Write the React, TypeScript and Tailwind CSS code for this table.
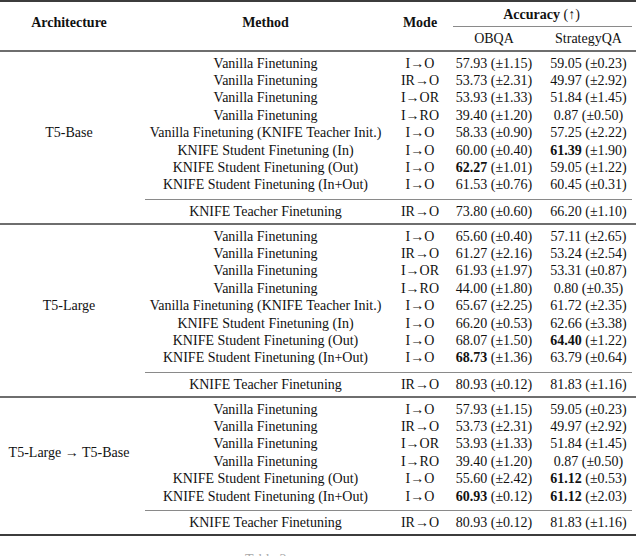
import React from "react";

type Cell = React.ReactNode;
type Row = [Cell, Cell, Cell, Cell];

const B = ({ children }: { children: React.ReactNode }) => <span className="font-bold">{children}</span>;

const block1: Row[] = [
  ["Vanilla Finetuning", "I→O", "57.93 (±1.15)", "59.05 (±0.23)"],
  ["Vanilla Finetuning", "IR→O", "53.73 (±2.31)", "49.97 (±2.92)"],
  ["Vanilla Finetuning", "I→OR", "53.93 (±1.33)", "51.84 (±1.45)"],
  ["Vanilla Finetuning", "I→RO", "39.40 (±1.20)", "0.87 (±0.50)"],
  ["Vanilla Finetuning (KNIFE Teacher Init.)", "I→O", "58.33 (±0.90)", "57.25 (±2.22)"],
  ["KNIFE Student Finetuning (In)", "I→O", "60.00 (±0.40)", <><B>61.39</B> (±1.90)</>],
  ["KNIFE Student Finetuning (Out)", "I→O", <><B>62.27</B> (±1.01)</>, "59.05 (±1.22)"],
  ["KNIFE Student Finetuning (In+Out)", "I→O", "61.53 (±0.76)", "60.45 (±0.31)"],
];
const teacher1: Row = ["KNIFE Teacher Finetuning", "IR→O", "73.80 (±0.60)", "66.20 (±1.10)"];

const block2: Row[] = [
  ["Vanilla Finetuning", "I→O", "65.60 (±0.40)", "57.11 (±2.65)"],
  ["Vanilla Finetuning", "IR→O", "61.27 (±2.16)", "53.24 (±2.54)"],
  ["Vanilla Finetuning", "I→OR", "61.93 (±1.97)", "53.31 (±0.87)"],
  ["Vanilla Finetuning", "I→RO", "44.00 (±1.80)", "0.80 (±0.35)"],
  ["Vanilla Finetuning (KNIFE Teacher Init.)", "I→O", "65.67 (±2.25)", "61.72 (±2.35)"],
  ["KNIFE Student Finetuning (In)", "I→O", "66.20 (±0.53)", "62.66 (±3.38)"],
  ["KNIFE Student Finetuning (Out)", "I→O", "68.07 (±1.50)", <><B>64.40</B> (±1.22)</>],
  ["KNIFE Student Finetuning (In+Out)", "I→O", <><B>68.73</B> (±1.36)</>, "63.79 (±0.64)"],
];
const teacher2: Row = ["KNIFE Teacher Finetuning", "IR→O", "80.93 (±0.12)", "81.83 (±1.16)"];

const block3: Row[] = [
  ["Vanilla Finetuning", "I→O", "57.93 (±1.15)", "59.05 (±0.23)"],
  ["Vanilla Finetuning", "IR→O", "53.73 (±2.31)", "49.97 (±2.92)"],
  ["Vanilla Finetuning", "I→OR", "53.93 (±1.33)", "51.84 (±1.45)"],
  ["Vanilla Finetuning", "I→RO", "39.40 (±1.20)", "0.87 (±0.50)"],
  ["KNIFE Student Finetuning (Out)", "I→O", "55.60 (±2.42)", <><B>61.12</B> (±0.53)</>],
  ["KNIFE Student Finetuning (In+Out)", "I→O", <><B>60.93</B> (±0.12)</>, <><B>61.12</B> (±2.03)</>],
];
const teacher3: Row = ["KNIFE Teacher Finetuning", "IR→O", "80.93 (±0.12)", "81.83 (±1.16)"];

function RowCells({ r }: { r: Row }) {
  return (
    <>
      <div className="col-start-2 text-center whitespace-nowrap">{r[0]}</div>
      <div className="text-center whitespace-nowrap">{r[1]}</div>
      <div className="text-center whitespace-nowrap">{r[2]}</div>
      <div className="text-center whitespace-nowrap">{r[3]}</div>
    </>
  );
}

function Block({ label, rows, teacher, centered }: { label: React.ReactNode; rows: Row[]; teacher: Row; centered?: boolean }) {
  return (
    <>
      <div className="grid grid-cols-[138px_255px_54px_94px_95px] pt-[3px]">
        {centered ? (
          <div className="col-start-1 row-start-1 row-span-6 flex items-center justify-center whitespace-nowrap">{label}</div>
        ) : (
          <div className="col-start-1 row-start-5 text-center whitespace-nowrap">{label}</div>
        )}
        {rows.map((r, i) => (
          <RowCells key={i} r={r} />
        ))}
        <div className="col-start-2 col-span-4 mt-[5px] mb-[3px] ml-[7px] mr-[4px] h-px bg-[#8a8a8a]" />
        <RowCells r={teacher} />
      </div>
      <div className="mt-[2.4px] h-[2px] bg-[#6e6e6e]" />
    </>
  );
}

export default function App() {
  return (
    <div
      className="w-[640px] h-[556px] overflow-hidden bg-white text-[14px] leading-[17.4px] text-[#111]"
      style={{ fontFamily: '"Liberation Serif", "Times New Roman", serif' }}
    >
      <div className="w-[636px]">
        <div className="h-[2px] bg-[#3c3c3c]" />
        <div className="grid grid-cols-[138px_255px_54px_94px_95px] grid-rows-[24px_1px_22.5px] font-bold">
          <div className="col-start-1 row-start-1 row-span-3 pt-[12.3px] text-center">Architecture</div>
          <div className="col-start-2 row-start-1 row-span-3 pt-[12.3px] text-center">Method</div>
          <div className="col-start-3 row-start-1 row-span-3 pt-[12.3px] text-center">Mode</div>
          <div className="col-start-4 col-span-2 row-start-1 pt-[4.3px] text-center">
            Accuracy <span className="font-normal">(↑)</span>
          </div>
          <div className="col-start-4 col-span-2 row-start-2 ml-[6px] mr-[4px] bg-[#8a8a8a]" />
          <div className="col-start-4 row-start-3 pt-[3.3px] text-center font-normal">OBQA</div>
          <div className="col-start-5 row-start-3 pt-[3.3px] text-center font-normal">StrategyQA</div>
        </div>
        <div className="h-[2px] bg-[#6e6e6e]" />
        <Block label="T5-Base" rows={block1} teacher={teacher1} />
        <Block label="T5-Large" rows={block2} teacher={teacher2} />
        <Block label="T5-Large → T5-Base" rows={block3} teacher={teacher3} centered />
        <div className="h-[2px] bg-[#3c3c3c] -mt-[2px]" />
        <div className="mt-[15px] pl-[245px] text-[#aaa] whitespace-nowrap">Table 2:</div>
      </div>
    </div>
  );
}
